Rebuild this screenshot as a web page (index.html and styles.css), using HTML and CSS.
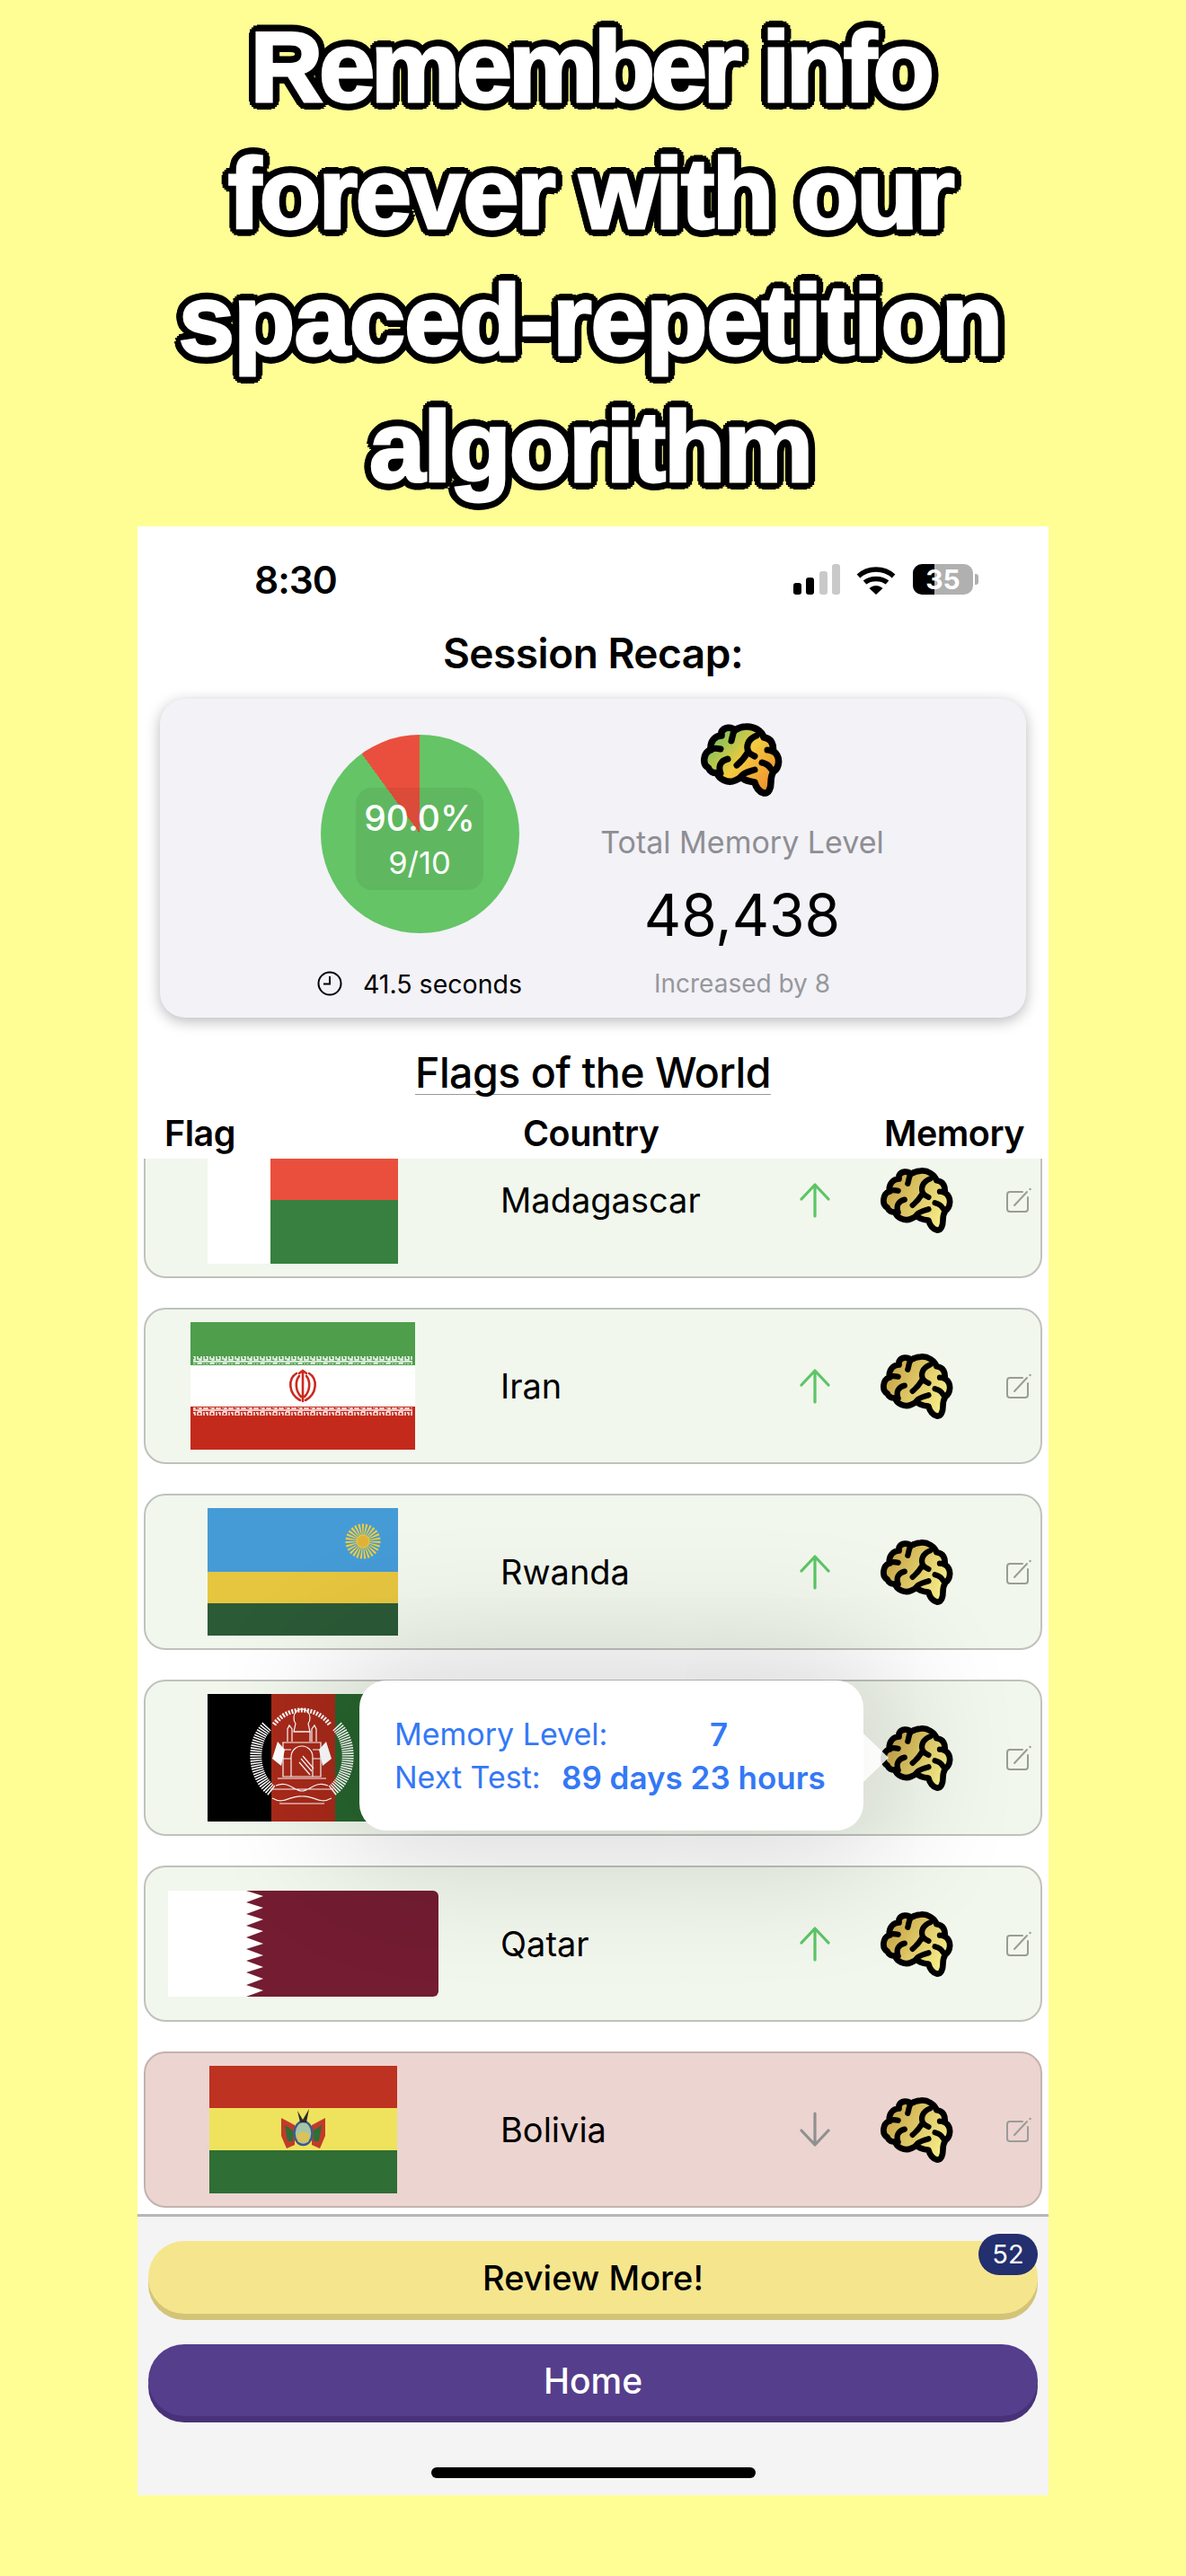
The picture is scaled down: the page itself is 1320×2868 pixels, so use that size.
FILE: index.html
```html
<!DOCTYPE html>
<html lang="en">
<head>
  <meta charset="utf-8">
  <title>Session Recap</title>
  <link rel="stylesheet" href="styles.css">
</head>
<body>
  <svg class="sprite" width="0" height="0">
    <defs>
      <linearGradient id="gold" x1="0" y1="0.3" x2="1" y2="0.8">
        <stop offset="0" stop-color="#c6a346"/>
        <stop offset="1" stop-color="#faf38d"/>
      </linearGradient>
      <linearGradient id="heat" x1="0" y1="0.1" x2="1" y2="0.9">
        <stop offset="0" stop-color="#55c267"/>
        <stop offset="0.5" stop-color="#f3ca3e"/>
        <stop offset="1" stop-color="#f0872c"/>
      </linearGradient>
      <pattern id="kufic" width="14" height="9" patternUnits="userSpaceOnUse">
        <path d="M0 8H14M1 1V6H5V2H3M8 1V6M8 1H12V6H10V4" fill="none" stroke="#fff" stroke-width="1.400"/>
      </pattern>
      <symbol id="brain" viewBox="0 0 92 82">
        <path fill="inherit" stroke="#000" stroke-width="7.5" stroke-linejoin="round" d="M10.5 30C3 33 1 46 8.5 50C10 54 14 56 18 55.5C20 62 30 68 38 64C41 63 44 61 45.5 59.5C47 64 54 65 60 66C61 70 64 76 70 78C76 79 78 72 78 66C78 62 79 57 81 54C87 50 90 38 80.5 31C81 24 79 17 70 16C68 9 59 3 50 4C45 4 41 6 38 8C34 4 26 4 23 10C23 11.5 23 13 23 14C16 14 10 20 11 30Z"/>
        <path fill="none" stroke="#000" stroke-width="7" stroke-linecap="round" stroke-linejoin="round" d="M37 9C35 14 35 17 34 20M11 29C15 28 18 28 22 29M30 40C22 42 19 48 22 56M62 14C52 18 50 26 53 32C55 35 58 36 60 37M52 33C49 38 45 43 40 47M74 30C77 30 79 31 81 32M68 44C72 45 76 47 78 51M60 52C54 54 48 55 45 59"/>
      </symbol>
      <symbol id="edit" viewBox="0 0 28 28">
        <path fill="none" stroke="#9a9c98" stroke-width="2" stroke-linecap="round" d="M18 5H4Q1 5 1 8V24Q1 27 4 27H21Q24 27 24 24V11M9 20L23 5"/>
        <circle cx="26.5" cy="2" r="1.2" fill="#9a9c98"/>
      </symbol>
      <symbol id="arrow-up" viewBox="0 0 34 40">
        <path fill="none" stroke="#5cc566" stroke-width="3.2" stroke-linecap="round" stroke-linejoin="round" d="M17 38V3M2 19L17 3L32 19"/>
      </symbol>
      <symbol id="arrow-down" viewBox="0 0 34 40">
        <path fill="none" stroke="#8f9190" stroke-width="3.2" stroke-linecap="round" stroke-linejoin="round" d="M17 2V37M2 21L17 37L32 21"/>
      </symbol>
    </defs>
  </svg>

  <h1 class="headline">
    <span class="line line-1">Remember info</span>
    <span class="line line-2">forever with our</span>
    <span class="line line-3">spaced-repetition</span>
    <span class="line line-4">algorithm</span>
  </h1>

  <main class="phone">
    <div class="status-bar">
      <span class="clock-time">8:30</span>
      <div class="status-icons">
        <svg class="signal" width="52" height="34" viewBox="0 0 52 34">
          <rect x="0" y="21" width="9" height="13" rx="3" fill="#000"/>
          <rect x="14" y="15" width="9" height="19" rx="3" fill="#000"/>
          <rect x="29" y="8" width="9" height="26" rx="3" fill="#c9c9c9"/>
          <rect x="43" y="0" width="9" height="34" rx="3" fill="#c9c9c9"/>
        </svg>
        <svg class="wifi" width="44" height="33" viewBox="0 0 44 33">
          <path fill="none" stroke="#000" stroke-width="5.5" d="M2.5 12.5C13 2.500 31 2.500 41.500 12.500M9.500 19.500C16 14 28 14 34.500 19.500"/>
          <path d="M14.500 26C19 22 25 22 29.500 26L22 33Z" fill="#000"/>
        </svg>
        <div class="battery"><span class="battery-level">35</span></div>
        <span class="battery-nub"></span>
      </div>
    </div>

    <h2 class="recap-title">Session Recap:</h2>

    <section class="recap-card">
      <div class="recap-left">
        <div class="pie">
          <div class="pie-label">
            <span class="pie-percent">90.0%</span>
            <span class="pie-count">9/10</span>
          </div>
        </div>
        <div class="duration">
          <svg width="28" height="28" viewBox="0 0 28 28">
            <circle cx="14" cy="14" r="12.500" fill="none" stroke="#000" stroke-width="2"/>
            <path d="M14 6V14.500H7" fill="none" stroke="#000" stroke-width="2"/>
          </svg>
          <span>41.5 seconds</span>
        </div>
      </div>
      <div class="recap-right">
        <svg class="recap-brain" width="92" height="82"><use href="#brain" fill="url(#heat)"/></svg>
        <div class="total-label">Total Memory Level</div>
        <div class="total-value">48,438</div>
        <div class="total-delta">Increased by 8</div>
      </div>
    </section>

    <h2 class="deck-title">Flags of the World</h2>

    <div class="table-head">
      <span>Flag</span>
      <span>Country</span>
      <span>Memory</span>
    </div>

    <div class="list">
      <div class="row">
        <div class="flag-cell">
          <svg width="212" height="142" viewBox="0 0 212 142">
            <rect width="212" height="142" fill="#fff"/>
            <rect x="70" width="142" height="71" fill="#ea4f3d"/>
            <rect x="70" y="71" width="142" height="71" fill="#37803f"/>
          </svg>
        </div>
        <span class="name">Madagascar</span>
        <svg class="trend" width="34" height="40"><use href="#arrow-up"/></svg>
        <svg class="brain" width="82" height="73"><use href="#brain" fill="url(#gold)"/></svg>
        <svg class="edit" width="28" height="28"><use href="#edit"/></svg>
      </div>

      <div class="row">
        <div class="flag-cell">
          <svg width="250" height="142" viewBox="0 0 250 142">
            <rect width="250" height="48" fill="#4e9e4b"/>
            <rect y="48" width="250" height="46" fill="#fff"/>
            <rect y="94" width="250" height="48" fill="#c42a1b"/>
            <rect x="3" y="38" width="244" height="9" fill="url(#kufic)"/>
            <rect x="3" y="95" width="244" height="9" fill="url(#kufic)"/>
            <path fill="none" stroke="#cc2a1e" stroke-width="2.600" stroke-linecap="round" d="M118 57C108 63 109 80 122 87M132 57C142 63 141 80 128 87M121 60C116 66 117 77 123 83M129 60C134 66 133 77 127 83M125 56V88M121 57L125 54L129 57"/>
          </svg>
        </div>
        <span class="name">Iran</span>
        <svg class="trend" width="34" height="40"><use href="#arrow-up"/></svg>
        <svg class="brain" width="82" height="73"><use href="#brain" fill="url(#gold)"/></svg>
        <svg class="edit" width="28" height="28"><use href="#edit"/></svg>
      </div>

      <div class="row">
        <div class="flag-cell">
          <svg width="212" height="142" viewBox="0 0 212 142">
            <rect width="212" height="71" fill="#459bd6"/>
            <rect y="71" width="212" height="35" fill="#e6c63f"/>
            <rect y="106" width="212" height="36" fill="#2b5a37"/>
            <circle cx="173" cy="37" r="13" fill="none" stroke="#f2cd3c" stroke-width="13" stroke-dasharray="1.600 1.400"/>
            <circle cx="173" cy="37" r="7" fill="#e0b338" stroke="#f2cd3c" stroke-width="1"/>
          </svg>
        </div>
        <span class="name">Rwanda</span>
        <svg class="trend" width="34" height="40"><use href="#arrow-up"/></svg>
        <svg class="brain" width="82" height="73"><use href="#brain" fill="url(#gold)"/></svg>
        <svg class="edit" width="28" height="28"><use href="#edit"/></svg>
      </div>

      <div class="row row-open">
        <div class="flag-cell">
          <svg width="212" height="142" viewBox="0 0 212 142">
            <rect width="71" height="142" fill="#000"/>
            <rect x="71" width="71" height="142" fill="#a92a1a"/>
            <rect x="142" width="70" height="142" fill="#27652e"/>
            <path fill="none" stroke="#fff" stroke-width="13" stroke-dasharray="1.500 1.200" d="M66 36C48 55 50 92 72 108M144 36C162 55 160 92 138 108"/>
            <path fill="none" stroke="#fff" stroke-width="5" stroke-dasharray="2 1.500" d="M74 34A38 38 0 0 1 136 34"/>
            <g fill="none" stroke="#fff" stroke-width="1.200">
              <path d="M84 92V54H126V92ZM93 92V70A12 12 0 0 1 117 70V92M78 94H132M98 33A9 10 0 1 1 112 33L114 42H96Z"/>
              <path d="M89 53V39L91 35L94 39V53M116 53V39L119 35L121 39V53M96 42H114V53M84 62H93M117 62H126M84 72H93M117 72H126"/>
              <path d="M76 102C90 96 96 108 105 108C114 108 120 96 134 102M72 116C86 124 92 112 105 114C118 112 124 124 138 116M80 122H130M70 106H140"/>
              <path d="M102 76L114 90M104 72L116 86M106 69L118 83"/>
            </g>
            <path d="M72 72L78 53L86 62L82 80ZM138 72L132 53L124 62L128 80Z" fill="#fff"/>
          </svg>
        </div>
        <span class="name"></span>
        <svg class="trend" width="34" height="40"><use href="#arrow-up"/></svg>
        <svg class="brain" width="82" height="73"><use href="#brain" fill="url(#gold)"/></svg>
        <svg class="edit" width="28" height="28"><use href="#edit"/></svg>
        <div class="tooltip">
          <div class="tooltip-line">
            <span class="tooltip-key">Memory Level:</span>
            <span class="tooltip-level">7</span>
          </div>
          <div class="tooltip-line">
            <span class="tooltip-key tooltip-key-short">Next Test:</span>
            <span class="tooltip-next">89 days 23 hours</span>
          </div>
        </div>
      </div>

      <div class="row">
        <div class="flag-cell">
          <svg class="flag-qatar" width="301" height="118" viewBox="0 0 301 118">
            <rect width="301" height="118" fill="#fff"/>
            <path fill="#731c32" d="M87 0L106 6L87 13L106 19L87 26L106 32L87 39L106 45L87 52L106 59L87 65L106 72L87 78L106 85L87 91L106 98L87 105L106 111L87 118H301V0Z"/>
          </svg>
        </div>
        <span class="name">Qatar</span>
        <svg class="trend" width="34" height="40"><use href="#arrow-up"/></svg>
        <svg class="brain" width="82" height="73"><use href="#brain" fill="url(#gold)"/></svg>
        <svg class="edit" width="28" height="28"><use href="#edit"/></svg>
      </div>

      <div class="row row-wrong">
        <div class="flag-cell">
          <svg width="209" height="142" viewBox="0 0 209 142">
            <rect width="209" height="47" fill="#bd3221"/>
            <rect y="47" width="209" height="47" fill="#efe35d"/>
            <rect y="94" width="209" height="48" fill="#2f6e34"/>
            <path d="M80 58L95 66L95 88L86 92L80 78ZM129 58L114 66L114 88L123 92L129 78Z" fill="#c23a2a"/>
            <path d="M84 66L93 72V84L87 84ZM125 66L116 72V84L122 84Z" fill="#2f6e34"/>
            <ellipse cx="104.500" cy="75" rx="10" ry="13" fill="#a7c4a8" stroke="#3b5b8a" stroke-width="2.500"/>
            <path d="M97 78C100 72 109 72 112 78L110 85H99Z" fill="#d9c25a"/>
            <path d="M98 50L104 60L111 48L108 63H101Z" fill="#2b2b2b"/>
          </svg>
        </div>
        <span class="name">Bolivia</span>
        <svg class="trend" width="34" height="40"><use href="#arrow-down"/></svg>
        <svg class="brain" width="82" height="73"><use href="#brain" fill="url(#gold)"/></svg>
        <svg class="edit" width="28" height="28"><use href="#edit"/></svg>
      </div>
    </div>

    <footer class="actions">
      <button class="action action-review">Review More!<span class="badge">52</span></button>
      <button class="action action-home">Home</button>
      <div class="home-indicator"></div>
    </footer>
  </main>
</body>
</html>
```

FILE: styles.css
```css
body {
  margin: 0;
  height: 2868px;
  overflow: hidden;
  background-color: #fefe94;
  font-family: Inter, "Liberation Sans", sans-serif;
  color: #000;
}

.sprite {
  display: block;
}

.headline {
  margin: 0;
  padding: 4px 6px 0 0;
  height: 582px;
  box-sizing: border-box;
  font-family: "Liberation Sans", Arial, sans-serif;
  font-size: 112px;
  font-weight: bold;
  line-height: 141px;
  text-align: center;
  color: #fff;
  -webkit-text-stroke: 3px #fff;
  text-shadow:
    9px 0 0 #000, -9px 0 0 #000, 0 9px 0 #000, 0 -9px 0 #000,
    6px 6px 0 #000, -6px 6px 0 #000, 6px -6px 0 #000, -6px -6px 0 #000,
    8px 4px 0 #000, -8px 4px 0 #000, 8px -4px 0 #000, -8px -4px 0 #000,
    4px 8px 0 #000, -4px 8px 0 #000, 4px -8px 0 #000, -4px -8px 0 #000;
}

.line {
  display: block;
}

.line-1 {
  letter-spacing: -4.5px;
}

.line-2 {
  letter-spacing: -2.5px;
}

.line-3 {
  letter-spacing: -1px;
}

.line-4 {
  letter-spacing: -2px;
}

.phone {
  width: 1014px;
  height: 2192px;
  margin: 4px auto 0;
  background-color: #fff;
  display: flex;
  flex-direction: column;
}

/* status bar */
.status-bar {
  display: flex;
  justify-content: space-between;
  align-items: center;
  height: 44px;
  margin-top: 37px;
  padding: 0 78px 0 130px;
}

.clock-time {
  font-size: 42.5px;
  font-weight: 600;
  letter-spacing: -1px;
}

.status-icons {
  display: flex;
  align-items: center;
}

.wifi {
  margin-left: 18px;
}

.battery {
  width: 67px;
  height: 34px;
  margin-left: 19px;
  border-radius: 10px;
  background: linear-gradient(90deg, #000 36%, #b0b0b0 36%);
  display: flex;
  align-items: center;
  justify-content: center;
}

.battery-level {
  font-size: 30px;
  font-weight: 700;
  color: #fff;
}

.battery-nub {
  width: 4px;
  height: 12px;
  margin-left: 2px;
  border-radius: 0 3px 3px 0;
  background-color: #b0b0b0;
}

/* recap card */
.recap-title {
  margin: 32px 0 23px;
  font-size: 46px;
  font-weight: 600;
  line-height: 56px;
  text-align: center;
  letter-spacing: -0.5px;
}

.recap-card {
  display: flex;
  width: 964px;
  height: 355px;
  margin-left: 25px;
  flex-shrink: 0;
  padding-left: 130px;
  box-sizing: border-box;
  border-radius: 28px;
  background-color: #f2f2f7;
  box-shadow: 0 4px 16px rgba(0, 0, 0, 0.28);
}

.recap-left {
  width: 318px;
  padding-top: 40px;
  display: flex;
  flex-direction: column;
  align-items: center;
}

.pie {
  width: 221px;
  height: 221px;
  border-radius: 50%;
  background: conic-gradient(#65c466 0 324deg, #ea4f3d 324deg);
  display: flex;
  align-items: center;
  justify-content: center;
}

.pie-label {
  width: 142px;
  height: 114px;
  margin-top: 10px;
  border-radius: 18px;
  background-color: rgba(0, 0, 0, 0.06);
  color: #fff;
  display: flex;
  flex-direction: column;
  align-items: center;
}

.pie-percent {
  margin-top: 12px;
  font-size: 39px;
  font-weight: 500;
  line-height: 44px;
}

.pie-count {
  margin-top: 6px;
  font-size: 34.5px;
  line-height: 44px;
}

.duration {
  display: flex;
  align-items: center;
  gap: 23px;
  height: 36px;
  margin-top: 38px;
  font-size: 28.5px;
}

.recap-right {
  width: 340px;
  margin-left: 30px;
  padding-top: 27px;
  display: flex;
  flex-direction: column;
  align-items: center;
}

.total-label {
  margin-top: 31px;
  font-size: 34px;
  line-height: 40px;
  color: #8e8e93;
}

.total-value {
  margin-top: 26px;
  font-size: 64px;
  line-height: 70px;
}

.total-delta {
  margin-top: 23px;
  font-size: 28px;
  line-height: 36px;
  color: #97979c;
}

/* flag table */
.deck-title {
  align-self: center;
  margin: 38px 0 0;
  font-size: 46.5px;
  font-weight: 500;
  line-height: 47px;
  letter-spacing: -0.5px;
  border-bottom: 1px solid #9a9a9a;
}

.table-head {
  display: grid;
  grid-template-columns: 399px 402px auto;
  height: 50px;
  margin: 18px 0 3px;
  padding-left: 30px;
  font-size: 39.5px;
  font-weight: 600;
  line-height: 50px;
  letter-spacing: -0.5px;
}

.list {
  display: flex;
  flex-direction: column;
  gap: 33px;
  height: 1175px;
  padding: 0 7px;
  overflow: hidden;
  flex-shrink: 0;
}

.row {
  position: relative;
  display: flex;
  align-items: center;
  height: 174px;
  flex-shrink: 0;
  box-sizing: border-box;
  border: 2px solid #bfc2bc;
  border-radius: 24px;
  background-color: #f2f7ed;
}

.row:first-child {
  margin-top: -41px;
}

.row-wrong {
  background-color: #ecd4d0;
  border-color: #c3b2af;
}

.row-open {
  z-index: 2;
}

.flag-cell {
  width: 350px;
  display: flex;
  justify-content: center;
}

.flag-cell svg {
  display: block;
}

.flag-qatar {
  border-radius: 0 6px 6px 0;
}

.name {
  width: 333px;
  margin-left: 45px;
  font-size: 38px;
}

.trend {
  flex-shrink: 0;
}

.brain {
  margin-left: 56px;
  flex-shrink: 0;
}

.edit {
  margin-left: 58px;
  flex-shrink: 0;
}

.tooltip {
  position: absolute;
  left: 238px;
  top: -1px;
  width: 561px;
  height: 167px;
  padding: 36px 0 0 39px;
  box-sizing: border-box;
  border-radius: 30px;
  background-color: #fff;
  box-shadow: 0 0 150px 30px rgba(0, 0, 0, 0.16);
  color: #3478f6;
  font-size: 34px;
  line-height: 48px;
}

.tooltip::after {
  content: "";
  position: absolute;
  left: 100%;
  top: 59px;
  width: 28px;
  height: 54px;
  background-color: rgba(255, 255, 255, 0.85);
  clip-path: polygon(0 0, 100% 50%, 0 100%);
}

.tooltip-line {
  display: flex;
}

.tooltip-key {
  width: 351px;
}

.tooltip-key-short {
  width: 186px;
}

.tooltip-level {
  font-weight: 600;
  font-size: 35px;
}

.tooltip-next {
  font-size: 35px;
  font-weight: 600;
  white-space: nowrap;
}

/* bottom buttons */
.actions {
  flex: 1;
  display: flex;
  flex-direction: column;
  align-items: center;
  padding-top: 27px;
  box-sizing: border-box;
  border-top: 3px solid #b7b7b7;
  background-color: #f4f4f4;
}

.action {
  position: relative;
  width: 990px;
  height: 81px;
  padding: 0;
  border: none;
  border-radius: 40px;
  font-family: inherit;
  font-size: 38px;
  font-weight: 500;
}

.action-review {
  background-color: #f5e68e;
  box-shadow: 0 7px 0 #d3c478;
  color: #000;
}

.action-home {
  height: 80px;
  margin-top: 34px;
  background-color: #553e8c;
  box-shadow: 0 7px 0 #47327a;
  color: #fff;
  font-size: 39px;
}

.badge {
  position: absolute;
  top: -8px;
  right: 0;
  width: 66px;
  height: 46px;
  border-radius: 23px;
  background-color: #232f6e;
  color: #fff;
  font-size: 29px;
  font-weight: 400;
  line-height: 46px;
  text-align: center;
}

.home-indicator {
  width: 361px;
  height: 12px;
  margin-top: 57px;
  border-radius: 6px;
  background-color: #000;
}
```
